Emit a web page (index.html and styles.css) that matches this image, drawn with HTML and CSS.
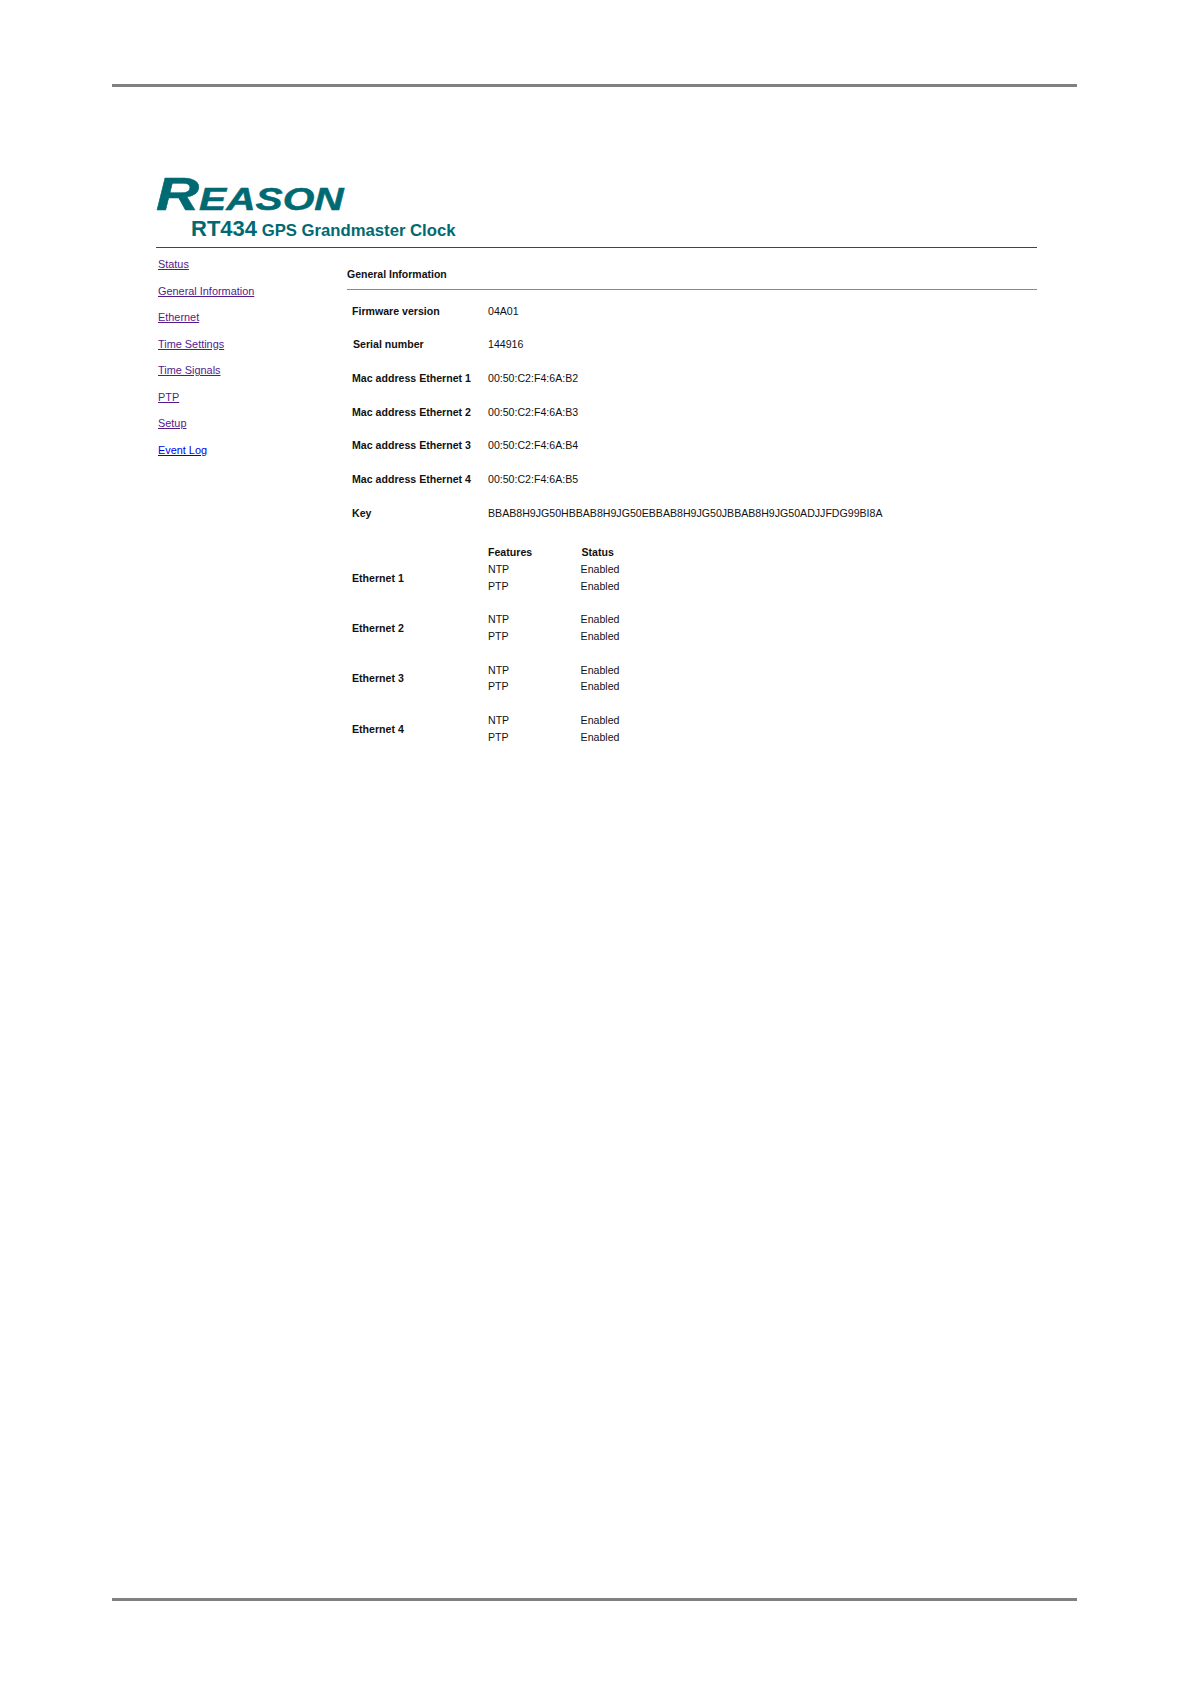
FILE: index.html
```html
<!DOCTYPE html>
<html lang="en">
<head>
    <meta charset="UTF-8">
    <title>RT434 GPS Grandmaster Clock</title>
    <link rel="stylesheet" href="styles.css">
</head>
<body>
    <div class="page">
        <div class="content">
            <div class="logo"><span class="logo-word">R<span class="logo-rest">EASON</span></span></div>
            <div class="product"><span class="model">RT434</span> GPS Grandmaster Clock</div>
            <div class="columns">
                <ul class="nav">
                    <li><a href="#">Status</a></li>
                    <li><a href="#">General Information</a></li>
                    <li><a href="#">Ethernet</a></li>
                    <li><a href="#">Time Settings</a></li>
                    <li><a href="#">Time Signals</a></li>
                    <li><a href="#">PTP</a></li>
                    <li><a href="#">Setup</a></li>
                    <li><a href="#" class="fresh">Event Log</a></li>
                </ul>
                <div class="main">
                    <h2>General Information</h2>
                    <div class="info-row"><b>Firmware version</b><span>04A01</span></div>
                    <div class="info-row"><b class="nudge">Serial number</b><span>144916</span></div>
                    <div class="info-row"><b>Mac address Ethernet 1</b><span>00:50:C2:F4:6A:B2</span></div>
                    <div class="info-row"><b>Mac address Ethernet 2</b><span>00:50:C2:F4:6A:B3</span></div>
                    <div class="info-row"><b>Mac address Ethernet 3</b><span>00:50:C2:F4:6A:B4</span></div>
                    <div class="info-row"><b>Mac address Ethernet 4</b><span>00:50:C2:F4:6A:B5</span></div>
                    <div class="info-row"><b>Key</b><span>BBAB8H9JG50HBBAB8H9JG50EBBAB8H9JG50JBBAB8H9JG50ADJJFDG99BI8A</span></div>
                    <div class="features-head"><b>Features</b><b>Status</b></div>
                    <div class="port">
                        <b>Ethernet 1</b>
                        <div class="features"><span>NTP</span><span>Enabled</span><span>PTP</span><span>Enabled</span></div>
                    </div>
                    <div class="port">
                        <b>Ethernet 2</b>
                        <div class="features"><span>NTP</span><span>Enabled</span><span>PTP</span><span>Enabled</span></div>
                    </div>
                    <div class="port">
                        <b>Ethernet 3</b>
                        <div class="features"><span>NTP</span><span>Enabled</span><span>PTP</span><span>Enabled</span></div>
                    </div>
                    <div class="port">
                        <b>Ethernet 4</b>
                        <div class="features"><span>NTP</span><span>Enabled</span><span>PTP</span><span>Enabled</span></div>
                    </div>
                </div>
            </div>
        </div>
    </div>
</body>
</html>
```

FILE: styles.css
```css
html, body { margin: 0; padding: 0; background-color: #ffffff; }
body { font-family: "Liberation Sans", Arial, sans-serif; font-size: 10.6px; color: #111111; }
.page { display: flex; flex-direction: column; height: 1517px; margin: 84px 114px 0 112px; border-top: 3px solid #808080; border-bottom: 3px solid #808080; box-sizing: border-box; }
.content { margin: 0 40px 0 44px; padding-top: 84px; }
.logo { height: 42px; padding-top: 2.4px; box-sizing: border-box; color: #006a72; }
.logo-word { display: inline-block; font-size: 47px; line-height: 42px; font-weight: bold; font-style: italic; transform-origin: left top; transform: scaleX(1.27); -webkit-text-stroke: 0.5px #006a72; }
.logo-rest { font-size: 32px; }
.product { height: 35px; padding: 4.3px 0 0 35px; box-sizing: border-box; font-size: 16.7px; line-height: 24px; font-weight: bold; color: #006a72; border-bottom: 1px solid #444444; }
.model { font-size: 22px; }
.columns { display: flex; }
.nav { width: 191px; margin: 0; padding: 3px 0 0 2px; list-style: none; box-sizing: border-box; }
.nav li { height: 26.5px; line-height: 26.5px; font-size: 10.9px; }
.nav a { color: #551a8b; }
.nav a.fresh { color: #0000ee; }
.main { flex: 1; }
h2 { margin: 0 0 4.6px; height: 42px; line-height: 53px; font-size: 10.5px; box-sizing: border-box; border-bottom: 1px solid #888888; }
.info-row { display: grid; grid-template-columns: 136px 1fr; height: 33.7px; line-height: 33.7px; padding-left: 5px; }
.nudge { padding-left: 1px; }
.features-head { display: grid; grid-template-columns: 93.5px 1fr; padding: 13.4px 0 0 141px; height: 22.4px; line-height: 17px; box-sizing: content-box; margin-bottom: -5.4px; }
.port { display: grid; grid-template-columns: 136px 1fr; align-items: center; padding-left: 5px; height: 33.6px; margin-bottom: 16.8px; }
.features { display: grid; grid-template-columns: 92.6px 1fr; line-height: 16.8px; }
```
